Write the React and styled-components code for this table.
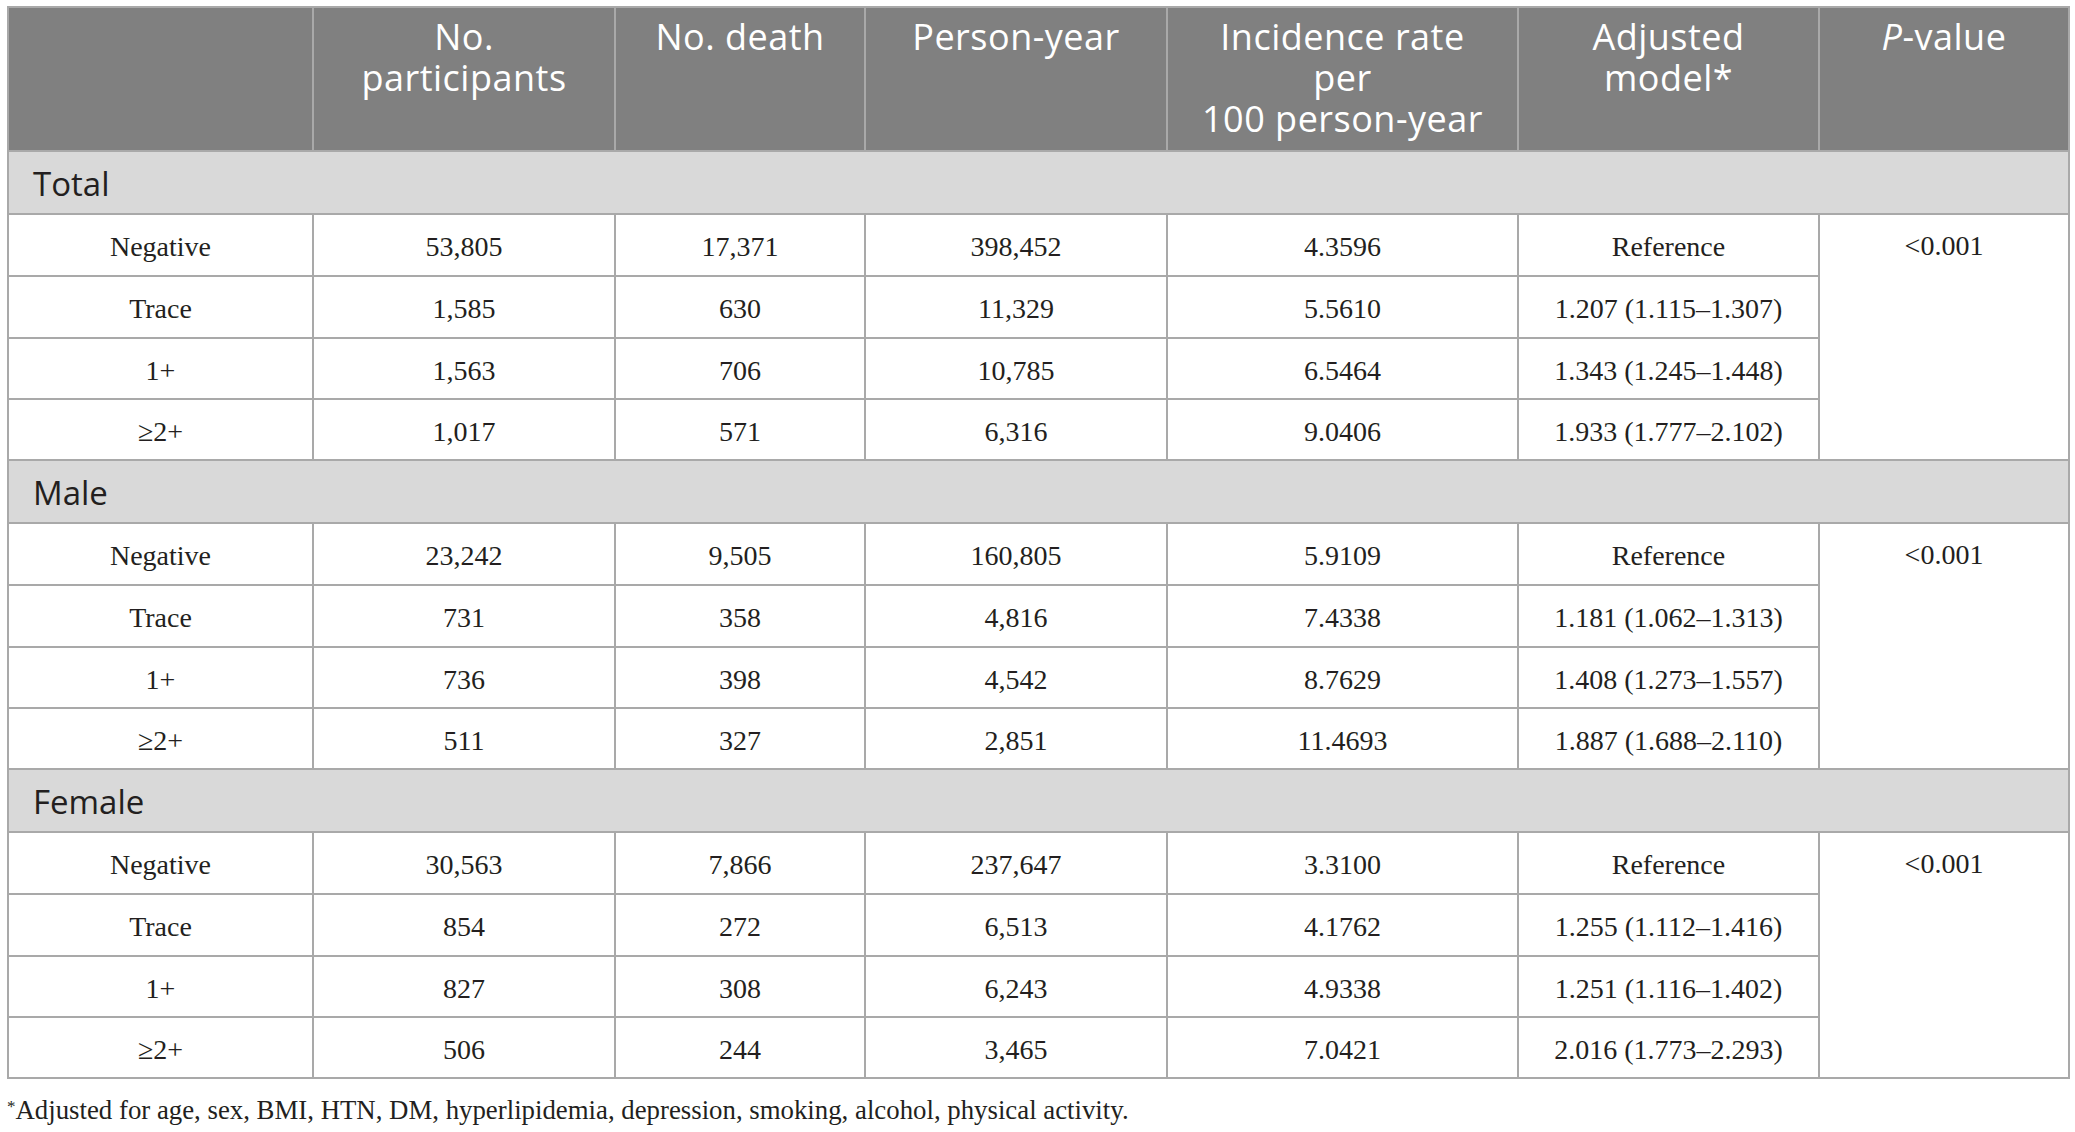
import React from 'react';
import styled, { createGlobalStyle } from 'styled-components';

const GlobalStyle = createGlobalStyle`
  html, body {
    margin: 0;
    padding: 0;
    background: #ffffff;
  }
  body {
    padding: 6px 7px 0;
  }
`;

const Wrapper = styled.div`
  width: 2061px;
`;

const Table = styled.table`
  width: 2061px;
  table-layout: fixed;
  border-collapse: collapse;
  border: 2px solid #aaaaaa;
`;

const HeadRow = styled.tr`
  height: 144px;
`;

const HeadCell = styled.th`
  background: #808080;
  color: #ffffff;
  font-family: 'Open Sans', 'Noto Sans', sans-serif;
  font-weight: 400;
  font-size: 36px;
  line-height: 41px;
  letter-spacing: 0.5px;
  text-align: center;
  vertical-align: top;
  padding: 8px 6px 0;
  border: 2px solid #a9a9a9;
`;

const SectionRow = styled.tr`
  height: 63px;
`;

const SectionCell = styled.td`
  background: #d9d9d9;
  color: #231f20;
  font-family: 'Open Sans', 'Noto Sans', sans-serif;
  font-size: 33px;
  text-align: left;
  vertical-align: middle;
  padding: 2px 0 0 24px;
  border: 2px solid #a9a9a9;
`;

const DataRow = styled.tr`
  height: ${(p) => p.$h}px;
`;

const Cell = styled.td`
  color: #231f20;
  font-family: 'Liberation Serif', 'Times New Roman', serif;
  font-size: 28px;
  text-align: center;
  vertical-align: ${(p) => (p.$top ? 'top' : 'middle')};
  padding: ${(p) => (p.$top ? '15px 4px 0' : '4px 4px 0')};
  border: 2px solid #a9a9a9;
  background: #ffffff;
`;

const Footnote = styled.p`
  margin: 13px 0 0;
  font-family: 'Liberation Serif', 'Times New Roman', serif;
  font-size: 26.8px;
  line-height: 30px;
  color: #231f20;
`;

const Sup = styled.span`
  font-size: 17px;
  vertical-align: 7px;
`;

const widths = [305, 302, 250, 302, 351, 301, 250];

const sections = [
  {
    label: 'Total',
    rows: [
      ['Negative', '53,805', '17,371', '398,452', '4.3596', 'Reference'],
      ['Trace', '1,585', '630', '11,329', '5.5610', '1.207 (1.115–1.307)'],
      ['1+', '1,563', '706', '10,785', '6.5464', '1.343 (1.245–1.448)'],
      ['≥2+', '1,017', '571', '6,316', '9.0406', '1.933 (1.777–2.102)'],
    ],
  },
  {
    label: 'Male',
    rows: [
      ['Negative', '23,242', '9,505', '160,805', '5.9109', 'Reference'],
      ['Trace', '731', '358', '4,816', '7.4338', '1.181 (1.062–1.313)'],
      ['1+', '736', '398', '4,542', '8.7629', '1.408 (1.273–1.557)'],
      ['≥2+', '511', '327', '2,851', '11.4693', '1.887 (1.688–2.110)'],
    ],
  },
  {
    label: 'Female',
    rows: [
      ['Negative', '30,563', '7,866', '237,647', '3.3100', 'Reference'],
      ['Trace', '854', '272', '6,513', '4.1762', '1.255 (1.112–1.416)'],
      ['1+', '827', '308', '6,243', '4.9338', '1.251 (1.116–1.402)'],
      ['≥2+', '506', '244', '3,465', '7.0421', '2.016 (1.773–2.293)'],
    ],
  },
];

const rowHeights = [62, 62, 61, 61];

export default function App() {
  return (
    <Wrapper>
      <GlobalStyle />
      <Table>
        <colgroup>
          {widths.map((w, i) => (
            <col key={i} style={{ width: w }} />
          ))}
        </colgroup>
        <thead>
          <HeadRow>
            <HeadCell />
            <HeadCell>
              No.
              <br />
              participants
            </HeadCell>
            <HeadCell>No. death</HeadCell>
            <HeadCell>Person-year</HeadCell>
            <HeadCell>
              Incidence rate
              <br />
              per
              <br />
              100 person-year
            </HeadCell>
            <HeadCell>
              Adjusted
              <br />
              model*
            </HeadCell>
            <HeadCell>
              <i>P</i>-value
            </HeadCell>
          </HeadRow>
        </thead>
        <tbody>
          {sections.map((section) => (
            <React.Fragment key={section.label}>
              <SectionRow>
                <SectionCell colSpan={7}>{section.label}</SectionCell>
              </SectionRow>
              {section.rows.map((row, i) => (
                <DataRow key={i} $h={rowHeights[i]}>
                  {row.map((value, j) => (
                    <Cell key={j}>{value}</Cell>
                  ))}
                  {i === 0 && (
                    <Cell rowSpan={4} $top>
                      &lt;0.001
                    </Cell>
                  )}
                </DataRow>
              ))}
            </React.Fragment>
          ))}
        </tbody>
      </Table>
      <Footnote>
        <Sup>*</Sup>Adjusted for age, sex, BMI, HTN, DM, hyperlipidemia, depression, smoking, alcohol,
        physical activity.
      </Footnote>
    </Wrapper>
  );
}
